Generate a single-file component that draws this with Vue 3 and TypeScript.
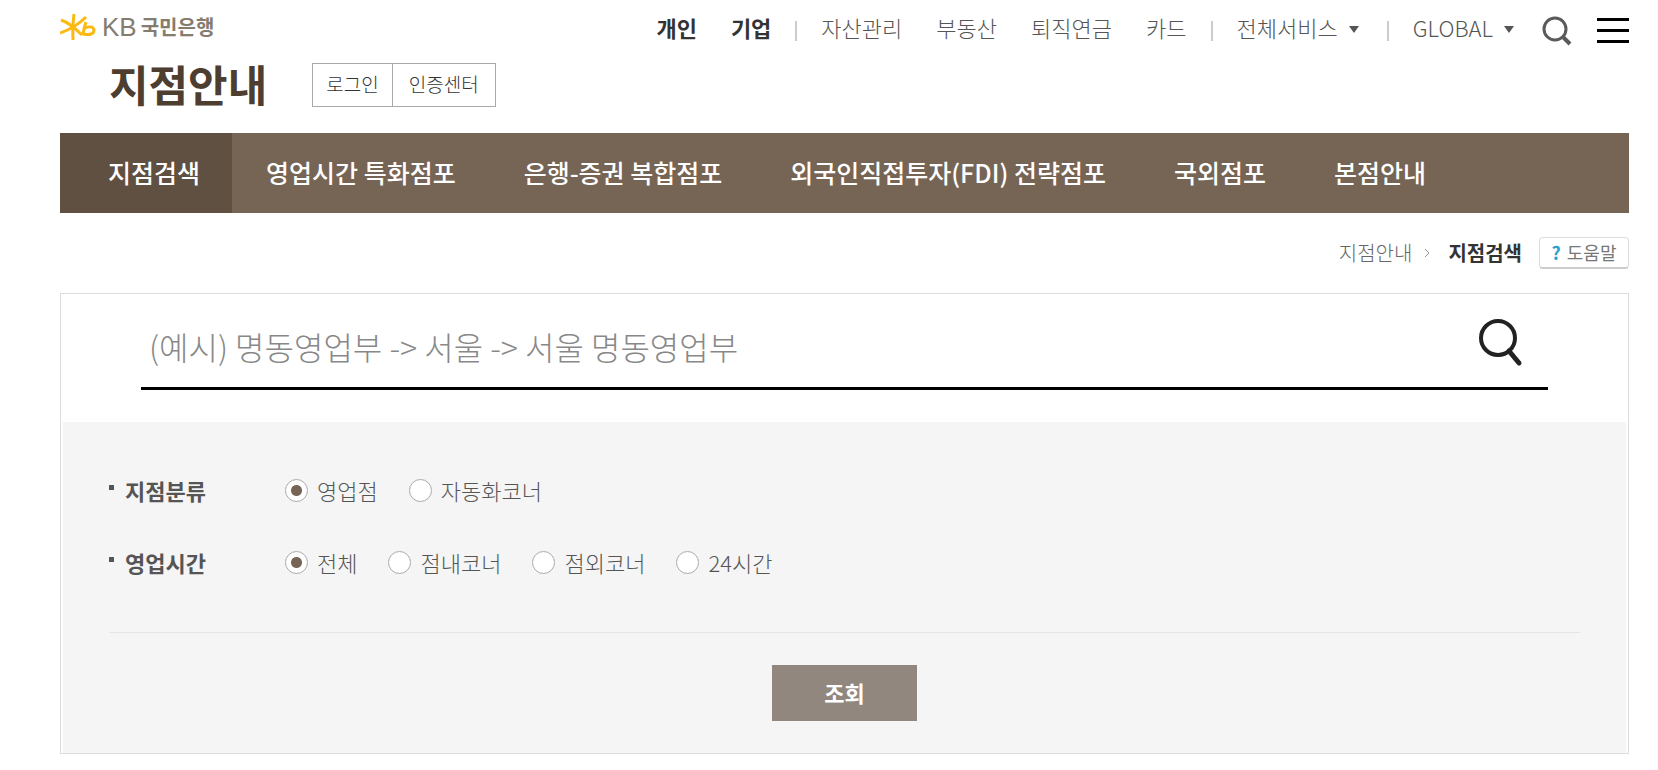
<script setup lang="ts">
import { ref } from 'vue'

interface RadioGroup {
  name: string
  label: string
  options: string[]
}

const mainMenus: string[] = ['개인', '기업']
const subMenus: string[] = ['자산관리', '부동산', '퇴직연금', '카드']
const tabs: string[] = [
  '지점검색',
  '영업시간 특화점포',
  '은행-증권 복합점포',
  '외국인직접투자(FDI) 전략점포',
  '국외점포',
  '본점안내',
]
const groups: RadioGroup[] = [
  { name: 'branch', label: '지점분류', options: ['영업점', '자동화코너'] },
  { name: 'hours', label: '영업시간', options: ['전체', '점내코너', '점외코너', '24시간'] },
]
const selected = ref<Record<string, string>>({ branch: '영업점', hours: '전체' })
const keyword = ref('')
</script>

<template>
  <div class="page">
    <header>
      <div class="top">
        <a class="logo" href="#" aria-label="KB국민은행">
          <svg width="36" height="28" viewBox="0 0 36 28" fill="none" stroke="#fdb913" stroke-width="3" stroke-linejoin="round" aria-hidden="true">
            <path d="M14 1Q12 14 13 27" />
            <path d="M1 7Q10 10 22 22" />
            <path d="M0 20Q15 15 26 4" />
            <path d="M26 9Q24 15 23 21Q34 23 34 17Q33 12 25 15" />
          </svg>
          <span class="logo-kb">KB</span><span class="logo-name">국민은행</span>
        </a>
        <nav class="util">
          <a v-for="m in mainMenus" :key="m" class="strong" href="#">{{ m }}</a>
          <i class="bar"></i>
          <a v-for="m in subMenus" :key="m" href="#">{{ m }}</a>
          <i class="bar"></i>
          <button type="button" class="drop">전체서비스<i class="caret"></i></button>
          <i class="bar"></i>
          <button type="button" class="drop">GLOBAL<i class="caret"></i></button>
          <button type="button" class="icon" aria-label="검색">
            <svg width="30" height="30" viewBox="0 0 30 30" fill="none" stroke="#5a5a5a">
              <circle cx="13" cy="13" r="11" stroke-width="3" />
              <path d="M21 21L28 28" stroke-width="4" />
            </svg>
          </button>
          <button type="button" class="menu" aria-label="전체메뉴"><i></i><i></i><i></i></button>
        </nav>
      </div>
      <div class="title-row">
        <h1>지점안내</h1>
        <div class="auth">
          <button type="button">로그인</button>
          <button type="button">인증센터</button>
        </div>
      </div>
    </header>

    <nav class="tabs">
      <a v-for="(t, i) in tabs" :key="t" :class="{ active: i === 0 }" href="#">{{ t }}</a>
    </nav>

    <div class="crumbs">
      <a href="#">지점안내</a>
      <svg width="6" height="10" viewBox="0 0 6 10" fill="none" stroke="#999" aria-hidden="true">
        <path d="M1 1L5 5L1 9" />
      </svg>
      <strong>지점검색</strong>
      <button type="button" class="help"><b>?</b>도움말</button>
    </div>

    <form class="panel" @submit.prevent>
      <div class="search">
        <input v-model="keyword" type="text" aria-label="지점 검색어" placeholder="(예시) 명동영업부 -> 서울 -> 서울 명동영업부" />
        <button type="submit" aria-label="지점 검색">
          <svg width="46" height="50" viewBox="0 0 46 50" fill="none" stroke="#222">
            <circle cx="21" cy="21" r="17" stroke-width="4" />
            <path d="M32 34L42 46" stroke-width="5" stroke-linecap="round" />
          </svg>
        </button>
      </div>
      <div class="filters">
        <div class="rows">
          <div v-for="g in groups" :key="g.name" class="row" role="radiogroup" :aria-label="g.label">
            <span class="row-label">{{ g.label }}</span>
            <label v-for="o in g.options" :key="o">
              <input v-model="selected[g.name]" type="radio" :name="g.name" :value="o" />{{ o }}
            </label>
          </div>
        </div>
        <div class="actions"><button type="submit">조회</button></div>
      </div>
    </form>
  </div>
</template>

<style>
body {
  margin: 0;
  background: #fff;
}
</style>

<style scoped>
.page {
  padding: 0 29px 16px 60px;
  font-family: "Noto Sans CJK KR", "Noto Sans", sans-serif;
  font-size: 22px;
  line-height: 32px;
  font-weight: 300;
  color: #555;
}
.page * {
  box-sizing: border-box;
}
a {
  color: inherit;
  text-decoration: none;
}
button {
  padding: 0;
  border: 0;
  background: none;
  font: inherit;
  color: inherit;
  cursor: pointer;
}
svg {
  display: block;
}
.top {
  display: flex;
  align-items: center;
  justify-content: space-between;
  height: 56px;
  padding-bottom: 3px;
}
.logo {
  display: flex;
  align-items: center;
  color: #857c70;
  white-space: nowrap;
}
.logo-kb {
  margin: 0 4px 0 6px;
  font-family: "Liberation Sans", sans-serif;
  font-size: 26px;
}
.logo-name {
  font-size: 20px;
  font-weight: 700;
}
.util {
  display: flex;
  align-items: center;
  white-space: nowrap;
}
.util a + a {
  margin-left: 34px;
}
.strong {
  font-weight: 700;
  color: #333;
}
.bar {
  width: 2px;
  height: 20px;
  margin: 8px 24px 0;
  background: #ccc;
}
.drop {
  display: flex;
  align-items: center;
}
.caret {
  margin: 6px 4px 0 11px;
  border: 5px solid transparent;
  border-top: 7px solid #555;
  border-bottom: 0;
}
.icon {
  margin: 9px 25px 0 24px;
}
.menu {
  display: grid;
  gap: 8px;
  width: 32px;
  margin-top: 8px;
}
.menu i {
  height: 3px;
  background: #000;
}
.title-row {
  display: flex;
  align-items: center;
  gap: 45px;
  height: 58px;
  margin-bottom: 19px;
  padding-left: 49px;
}
h1 {
  margin: 0;
  padding-bottom: 4px;
  font-size: 43px;
  line-height: 54px;
  font-weight: 700;
  color: #4d3e30;
}
.auth {
  display: flex;
}
.auth button {
  height: 44px;
  padding: 0 13px 2px;
  border: 1px solid #aaa;
  font-size: 19px;
  color: #333;
}
.auth button + button {
  margin-left: -1px;
  padding: 0 16px 2px;
}
.tabs {
  display: flex;
  height: 80px;
  background: #766555;
  color: #fff;
  font-size: 25px;
  line-height: 78px;
  font-weight: 500;
  white-space: nowrap;
}
.tabs a {
  padding: 0 34px;
}
.tabs .active {
  padding: 0 32px 0 48px;
  background: #605041;
}
.crumbs {
  display: flex;
  align-items: center;
  justify-content: flex-end;
  height: 80px;
  font-size: 20px;
  color: #666;
}
.crumbs svg {
  margin: 0 18px 0 12px;
}
.crumbs strong {
  font-weight: 700;
  color: #333;
}
.help {
  display: flex;
  align-items: center;
  justify-content: center;
  gap: 6px;
  height: 32px;
  width: 90px;
  margin-left: 17px;
  padding-bottom: 2px;
  border: 1px solid #ddd;
  border-bottom: 2px solid #ccc;
  border-radius: 4px;
  font-size: 18px;
  font-weight: 400;
  color: #777;
}
.help b {
  color: #2a9fd0;
}
.panel {
  border: 1px solid #ddd;
}
.search {
  display: flex;
  align-items: center;
  height: 96px;
  margin: 0 80px 32px;
  padding: 2px 25px 0 8px;
  border-bottom: 3px solid #000;
}
.search input {
  flex: 1;
  min-width: 0;
  height: 60px;
  margin-top: 8px;
  padding: 0;
  border: 0;
  outline: 0;
  background: none;
  font: inherit;
  font-size: 32px;
  color: #333;
}
.search input::placeholder {
  color: #888;
  opacity: 1;
}
.filters {
  margin: 0 2px;
  padding: 52px 46px 32px;
  background: #f5f5f5;
}
.rows {
  display: grid;
  gap: 40px;
  padding-bottom: 54px;
  border-bottom: 1px solid #e5e5e5;
}
.row {
  display: flex;
  align-items: center;
  gap: 31px;
}
.row-label {
  width: 145px;
  font-weight: 700;
}
.row-label::before {
  content: "";
  display: inline-block;
  width: 5px;
  height: 5px;
  margin-right: 11px;
  vertical-align: 10px;
  background: #555;
}
.row label {
  display: flex;
  align-items: center;
}
.row input {
  appearance: none;
  width: 23px;
  height: 23px;
  margin: 0 9px 0 0;
  border: 1px solid #aaa;
  border-radius: 50%;
  background: #fff;
}
.row input:checked {
  background: radial-gradient(circle, #766555 5px, #fff 6px);
}
.actions {
  padding-top: 32px;
  text-align: center;
}
.actions button {
  width: 145px;
  height: 56px;
  padding-bottom: 2px;
  background: #92877f;
  color: #fff;
  font-weight: 700;
}
</style>
